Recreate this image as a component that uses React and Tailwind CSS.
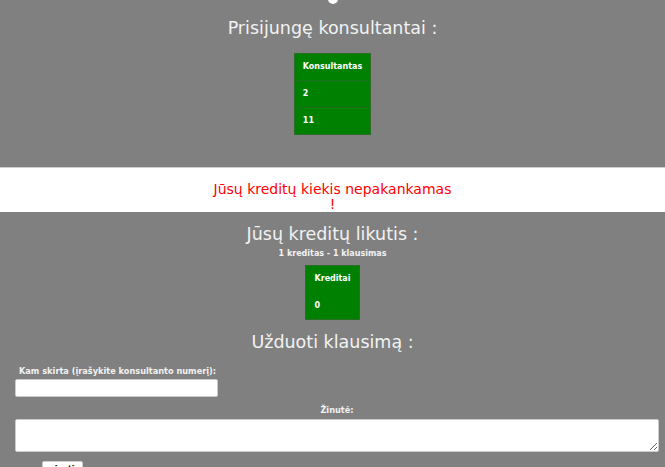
export default function App() {
  const font = { fontFamily: '"DejaVu Sans", Verdana, sans-serif' };
  return (
    <div className="relative min-h-[467px] w-[665px] overflow-hidden bg-[#808080] text-[#f2f2f2]" style={font}>
      <div className="absolute left-[328px] top-[-6px] h-[10px] w-[10px] rounded-full bg-white" />
      <div className="flex flex-col items-center pb-[32px]">
        <h1 className="mt-[16px] text-[17.5px] leading-[24px]">Prisijungę konsultantai :</h1>
        <table className="mt-[13px] border-collapse border border-[#2a6e2a] bg-[#008000] text-[8px] font-bold text-white">
          <tbody>
            <tr className="h-[27px] border-b border-[#1e701e]"><td className="px-[8px]">Konsultantas</td></tr>
            <tr className="h-[27px] border-b border-[#1e701e]"><td className="px-[8px]">2</td></tr>
            <tr className="h-[27px]"><td className="px-[8px]">11</td></tr>
          </tbody>
        </table>
      </div>
      <div className="h-[45px] border-t border-[#cfcfcf] bg-white">
        <p className="mt-[14px] whitespace-nowrap text-center text-[14px] leading-[15px] text-[#ff0000]">
          Jūsų kreditų kiekis nepakankamas
          <br />!
        </p>
      </div>
      <div className="flex flex-col items-center">
        <h2 className="mt-[10px] text-[17.5px] leading-[24px]">Jūsų kreditų likutis :</h2>
        <p className="mt-[2px] text-[8px] font-bold leading-[12px]">1 kreditas - 1 klausimas</p>
        <table className="mt-[5px] border-collapse border border-[#2a6e2a] bg-[#008000] text-[8px] font-bold text-white">
          <tbody>
            <tr className="h-[27px]"><td className="px-[8px]">Kreditai</td></tr>
            <tr className="h-[27px]"><td className="px-[8px]">0</td></tr>
          </tbody>
        </table>
        <h2 className="mt-[10px] text-[17.5px] leading-[24px]">Užduoti klausimą :</h2>
      </div>
      <div className="pl-[15px] pr-[6px]">
        <label className="mt-[11px] block pl-[4px] text-[8.2px] font-bold leading-[12px]">Kam skirta (įrašykite konsultanto numerį):</label>
        <input className="mt-[2px] block h-[18px] w-[203px] rounded-[2px] border border-[#cccccc] bg-white" />
        <label className="mt-[7px] block text-center text-[8.2px] font-bold leading-[12px]">Žinutė:</label>
        <textarea className="mt-[3px] block h-[33px] w-[644px] rounded-[2px] border border-[#cccccc] bg-white" />
        <button className="ml-[27px] mt-[9px] block h-[18px] rounded-[2px] border border-[#cccccc] bg-white px-[7px] text-[8px] font-bold text-black">siųsti</button>
      </div>
    </div>
  );
}
